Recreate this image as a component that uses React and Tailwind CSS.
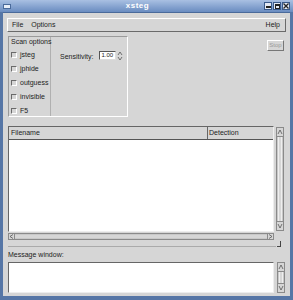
import React from "react";

const font = { fontFamily: '"Liberation Sans", Arial, sans-serif' };

function Check({ label }) {
  return (
    <div className="flex items-center h-[14px] gap-[3px]">
      <div className="w-[6px] h-[6px] border-t border-l border-[#6a6a6a] border-b border-r border-b-white border-r-white bg-[#d6d6d6]" />
      <span className="text-[7px] text-[#222] whitespace-nowrap">{label}</span>
    </div>
  );
}

function VScroll({ h }) {
  return (
    <div className="w-[8px] flex flex-col border border-[#8a8a8a] bg-[#c8c8c8]" style={{ height: h }}>
      <div className="h-[9px] border-b border-[#8a8a8a] bg-[#d6d6d6] flex items-center justify-center">
        <svg width="6" height="6" viewBox="0 0 6 6"><path d="M1 5 L3 1 L5 5" fill="none" stroke="#555" strokeWidth="0.8" /></svg>
      </div>
      <div className="flex-1 mx-[1px] bg-[#d6d6d6] border-x border-[#eee]" />
      <div className="h-[9px] border-t border-[#8a8a8a] bg-[#d6d6d6] flex items-center justify-center">
        <svg width="6" height="6" viewBox="0 0 6 6"><path d="M1 1 L3 5 L5 1" fill="none" stroke="#555" strokeWidth="0.8" /></svg>
      </div>
    </div>
  );
}

export default function App() {
  return (
    <div className="w-[293px] h-[300px] bg-[#5676a6] flex flex-col overflow-hidden" style={font}>
      {/* Title bar */}
      <div className="h-[12px] flex items-center px-[3px] bg-gradient-to-b from-[#a9c0e2] to-[#6a8cc0] relative">
        <div className="w-[8px] h-[5px] bg-[#e8eef8] border border-[#4a6a9a]" />
        <div className="flex-1 text-center text-white text-[8px] font-bold leading-none tracking-[0.5px]">xsteg</div>
        <div className="flex gap-[1px]">
          <div className="w-[8px] h-[8px] bg-[#e4eaf4] border border-[#3a5a8a] flex items-end justify-center pb-[1px]"><div className="w-[5px] h-[2px] bg-[#222]" /></div>
          <div className="w-[8px] h-[8px] bg-[#e4eaf4] border border-[#3a5a8a] flex items-center justify-center"><div className="w-[5px] h-[5px] border border-[#222] border-t-2" /></div>
          <div className="w-[8px] h-[8px] bg-[#e4eaf4] border border-[#3a5a8a] flex items-center justify-center">
            <svg width="6" height="6" viewBox="0 0 6 6"><path d="M0.5 0.5 L5.5 5.5 M5.5 0.5 L0.5 5.5" stroke="#222" strokeWidth="1.3" /></svg>
          </div>
        </div>
      </div>
      {/* Body */}
      <div className="flex-1 mx-[3px] mb-[4px] bg-[#d6d6d6] flex flex-col border-t border-[#4a6a9a]">
        {/* Menubar */}
        <div className="mt-[5px] mx-[4px] h-[14px] border border-t-white border-l-white border-b-[#6a6a6a] border-r-[#6a6a6a] flex items-center px-[4px] text-[7px] text-[#222]">
          <span>File</span>
          <span className="ml-[8px]">Options</span>
          <span className="ml-auto mr-[1px]">Help</span>
        </div>
        {/* Scan options row */}
        <div className="flex mt-[4px] ml-[5px] mr-[6px]">
          <div className="w-[120px] h-[81px] border border-t-[#9a9a9a] border-l-[#9a9a9a] border-b-white border-r-white flex">
            <div className="w-[42px] flex flex-col pl-[2px] border-r border-r-[#b0b0b0]">
              <div className="text-[7px] leading-[7px] mt-[1px] text-[#222] whitespace-nowrap">Scan options</div>
              <div className="mt-[3px] flex flex-col">
                <Check label="jsteg" />
                <Check label="jphide" />
                <Check label="outguess" />
                <Check label="invisible" />
                <Check label="F5" />
              </div>
            </div>
            <div className="flex-1 flex items-start pt-[14px] pl-[9px]">
              <span className="text-[7px] text-[#222] mt-[1px]">Sensitivity:</span>
              <div className="ml-[6px] w-[17px] h-[9px] bg-white border border-t-[#555] border-l-[#555] border-b-[#ddd] border-r-[#ddd] text-[6px] leading-[7px] pl-[1px] text-[#222]">1.00</div>
              <svg width="6" height="10" viewBox="0 0 6 10" className="ml-[1px]"><path d="M1 4 L3 1 L5 4 M1 6 L3 9 L5 6" fill="none" stroke="#555" strokeWidth="0.8" /></svg>
            </div>
          </div>
          <div className="ml-auto mt-[4px] w-[17px] h-[11px] border border-t-white border-l-white border-b-[#777] border-r-[#777] text-[6px] text-[#9a9a9a] flex items-center justify-center">Stop</div>
        </div>
        {/* List */}
        <div className="flex mt-[9px] ml-[5px]">
          <div className="w-[266px] h-[106px] bg-white border border-t-[#666] border-l-[#666] border-b-[#eee] border-r-[#eee] flex flex-col">
            <div className="h-[13px] flex bg-[#d6d6d6] border-b border-[#555] text-[7px] text-[#222]">
              <div className="w-[199px] pl-[2px] flex items-center border-r border-[#666]">Filename</div>
              <div className="flex-1 pl-[1px] flex items-center">Detection</div>
            </div>
          </div>
          <div className="ml-[2px] mt-[1px]"><VScroll h={104} /></div>
        </div>
        {/* H scroll */}
        <div className="ml-[5px] w-[266px] h-[7px] mt-[1px] border border-[#8a8a8a] bg-[#c8c8c8] flex">
          <div className="w-[6px] border-r border-[#8a8a8a] bg-[#d6d6d6] flex items-center justify-center">
            <svg width="5" height="5" viewBox="0 0 5 5"><path d="M4 0.5 L1 2.5 L4 4.5" fill="none" stroke="#555" strokeWidth="0.8" /></svg>
          </div>
          <div className="flex-1 my-[1px] bg-[#d6d6d6]" />
          <div className="w-[6px] border-l border-[#8a8a8a] bg-[#d6d6d6] flex items-center justify-center">
            <svg width="5" height="5" viewBox="0 0 5 5"><path d="M1 0.5 L4 2.5 L1 4.5" fill="none" stroke="#555" strokeWidth="0.8" /></svg>
          </div>
        </div>
        {/* separator */}
        <div className="flex items-end ml-[5px] mt-[1px]">
          <div className="w-[268px] h-[4px] border-b border-[#aaa]" />
          <div className="w-[4px] h-[6px] border-r border-b border-[#444] ml-[1px]" />
        </div>
        <div className="ml-[5px] mt-[4px] text-[7px] leading-[8px] text-[#222]">Message window:</div>
        <div className="flex ml-[5px] mt-[3px]">
          <div className="w-[266px] h-[31px] bg-white border border-t-[#666] border-l-[#666] border-b-[#eee] border-r-[#eee]" />
          <div className="ml-[3px]"><VScroll h={31} /></div>
        </div>
      </div>
    </div>
  );
}
